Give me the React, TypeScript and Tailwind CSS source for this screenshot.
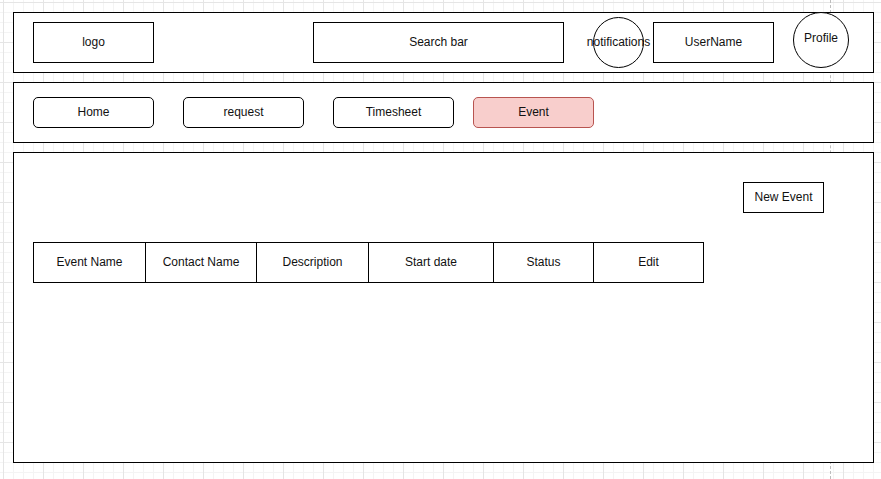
import React from "react";

const Box = ({ children, className = "" }: { children: React.ReactNode; className?: string }) => (
  <div className={`flex items-center justify-center border border-black bg-white whitespace-nowrap pb-[2px] ${className}`}>
    {children}
  </div>
);

export default function App() {
  const cols: { label: string; w: string }[] = [
    { label: "Event Name", w: "w-[112px]" },
    { label: "Contact Name", w: "w-[111px]" },
    { label: "Description", w: "w-[112px]" },
    { label: "Start date", w: "w-[125px]" },
    { label: "Status", w: "w-[100px]" },
    { label: "Edit", w: "w-[111px]" },
  ];
  return (
    <div className="relative w-[881px] h-[479px] overflow-hidden bg-white bg-[linear-gradient(to_right,#e5e5e5_1px,transparent_1px),linear-gradient(to_bottom,#e5e5e5_1px,transparent_1px),linear-gradient(to_right,#f4f4f4_1px,transparent_1px),linear-gradient(to_bottom,#f4f4f4_1px,transparent_1px)] [background-size:40px_40px,40px_40px,10px_10px,10px_10px] [background-position:3px_2px] pt-[12px] pl-[13px] font-['Liberation_Sans',Arial,sans-serif] text-[12px] leading-none text-[#111]">
      <div className="absolute left-[830px] top-0 h-full border-l border-dashed border-[#bdbdbd]" />

      {/* Header */}
      <div className="relative flex items-center w-[861px] h-[61px] border border-black bg-white">
        <Box className="ml-[19px] w-[121px] h-[41px]">logo</Box>
        <Box className="ml-[159px] w-[251px] h-[41px]">Search bar</Box>
        <div className="ml-[29px] w-[51px] h-[51px] rounded-full border border-black flex items-center justify-center whitespace-nowrap pb-[2px]">
          notifications
        </div>
        <Box className="ml-[9px] w-[121px] h-[41px]">UserName</Box>
        <div className="ml-[19px] self-start -mt-px w-[56px] h-[56px] rounded-full border border-black bg-white flex items-center justify-center whitespace-nowrap pb-[4px]">
          Profile
        </div>
      </div>

      {/* Nav */}
      <div className="relative mt-[9px] flex items-center w-[861px] h-[61px] border border-black bg-white">
        <Box className="ml-[19px] w-[121px] h-[31px] rounded-[5px]">Home</Box>
        <Box className="ml-[29px] w-[121px] h-[31px] rounded-[5px]">request</Box>
        <Box className="ml-[29px] w-[121px] h-[31px] rounded-[5px]">Timesheet</Box>
        <div className="ml-[19px] w-[121px] h-[31px] rounded-[5px] border border-[#b85450] bg-[#f8cecc] flex items-center justify-center pb-[2px]">
          Event
        </div>
      </div>

      {/* Content */}
      <div className="relative mt-[9px] w-[861px] h-[311px] border border-black bg-white">
        <div className="flex justify-end pt-[29px] pr-[49px]">
          <Box className="w-[81px] h-[31px]">New Event</Box>
        </div>
        <div className="mt-[29px] ml-[19px] flex">
          {cols.map((c, i) => (
            <div
              key={c.label}
              className={`${c.w} h-[41px] flex items-center justify-center border-y border-l border-black pb-[2px] ${i === cols.length - 1 ? "border-r" : ""}`}
            >
              {c.label}
            </div>
          ))}
        </div>
      </div>
    </div>
  );
}
